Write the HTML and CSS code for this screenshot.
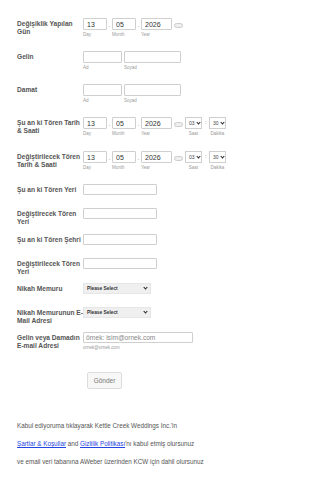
FILE: index.html
```html
<!DOCTYPE html>
<html lang="tr">
<head>
    <meta charset="UTF-8">
    <meta name="viewport" content="width=device-width, initial-scale=1.0">
    <title>Değişiklik Formu</title>
    <link rel="stylesheet" href="styles.css">
</head>
<body>

    <form class="form">
        <div class="row h33">
            <label class="lbl">Değişiklik Yapılan Gün</label>
            <div class="date">
                <div class="part"><input type="text" class="in day" value="13"><span class="sub">Day</span></div>
                <span class="sep">.</span>
                <div class="part"><input type="text" class="in day" value="05"><span class="sub">Month</span></div>
                <span class="sep">.</span>
                <div class="part"><input type="text" class="in year" value="2026"><span class="sub">Year</span></div>
                <span class="cal"></span>
            </div>
        </div>

        <div class="row h33">
            <label class="lbl">Gelin</label>
            <div class="names">
                <div class="part"><input type="text" class="in first"><span class="sub">Ad</span></div>
                <div class="part"><input type="text" class="in last"><span class="sub">Soyad</span></div>
            </div>
        </div>

        <div class="row h33">
            <label class="lbl">Damat</label>
            <div class="names">
                <div class="part"><input type="text" class="in first"><span class="sub">Ad</span></div>
                <div class="part"><input type="text" class="in last"><span class="sub">Soyad</span></div>
            </div>
        </div>

        <div class="row h34">
            <label class="lbl">Şu an ki Tören Tarih &amp; Saati</label>
            <div class="date">
                <div class="part"><input type="text" class="in day" value="13"><span class="sub">Day</span></div>
                <span class="sep">.</span>
                <div class="part"><input type="text" class="in day" value="05"><span class="sub">Month</span></div>
                <span class="sep">.</span>
                <div class="part"><input type="text" class="in year" value="2026"><span class="sub">Year</span></div>
                <span class="cal"></span>
                <div class="part mid"><span class="time">03 <i class="chev"></i></span><span class="sub">Saat</span></div>
                <span class="colon">:</span>
                <div class="part mid"><span class="time">30 <i class="chev"></i></span><span class="sub">Dakika</span></div>
            </div>
        </div>

        <div class="row h33">
            <label class="lbl">Değiştirilecek Tören Tarih &amp; Saati</label>
            <div class="date">
                <div class="part"><input type="text" class="in day" value="13"><span class="sub">Day</span></div>
                <span class="sep">.</span>
                <div class="part"><input type="text" class="in day" value="05"><span class="sub">Month</span></div>
                <span class="sep">.</span>
                <div class="part"><input type="text" class="in year" value="2026"><span class="sub">Year</span></div>
                <span class="cal"></span>
                <div class="part mid"><span class="time">03 <i class="chev"></i></span><span class="sub">Saat</span></div>
                <span class="colon">:</span>
                <div class="part mid"><span class="time">30 <i class="chev"></i></span><span class="sub">Dakika</span></div>
            </div>
        </div>

        <div class="row h24">
            <label class="lbl">Şu an ki Tören Yeri</label>
            <input type="text" class="in wide">
        </div>

        <div class="row h26">
            <label class="lbl">Değiştirecek Tören Yeri</label>
            <input type="text" class="in wide">
        </div>

        <div class="row h24">
            <label class="lbl">Şu an ki Tören Şehri</label>
            <input type="text" class="in wide">
        </div>

        <div class="row h25">
            <label class="lbl">Değiştirilecek Tören Yeri</label>
            <input type="text" class="in wide">
        </div>

        <div class="row h24">
            <label class="lbl">Nikah Memuru</label>
            <span class="select">Please Select <i class="chev"></i></span>
        </div>

        <div class="row h25">
            <label class="lbl">Nikah Memurunun E-Mail Adresi</label>
            <span class="select">Please Select <i class="chev"></i></span>
        </div>

        <div class="row">
            <label class="lbl">Gelin veya Damadın E-mail Adresi</label>
            <div class="part">
                <input type="text" class="in email" placeholder="örnek: isim@ornek.com">
                <span class="sub">ornek@ornek.com</span>
            </div>
        </div>

        <div class="actions">
            <button type="button" class="btn">Gönder</button>
        </div>
    </form>

    <div class="terms">
        <p>Kabul ediyoruma tıklayarak Kettle Creek Weddings Inc.'in</p>
        <p><a href="#">Şartlar &amp; Koşullar</a> and <a href="#">Gizlilik Politikası</a>'nı kabul etmiş olursunuz</p>
        <p>ve email veri tabanına AWeber üzerinden KCW için dahil olursunuz</p>
    </div>

</body>
</html>
```

FILE: styles.css
```css
body {
    margin: 0;
    background-color: #ffffff;
    font-family: "Liberation Sans", Arial, sans-serif;
    color: #555;
}

.form {
    padding: 18px 0 0 17px;
}

.row {
    display: flex;
    align-items: flex-start;
}

.h24 { height: 24px; }
.h25 { height: 25px; }
.h26 { height: 26px; }
.h33 { height: 33px; }
.h34 { height: 34px; }

.lbl {
    width: 66px;
    flex-shrink: 0;
    padding-top: 2px;
    font-size: 6.6px;
    line-height: 8px;
    font-weight: bold;
    color: #555;
}

.date, .names {
    display: flex;
    align-items: flex-start;
}

.names {
    gap: 2px;
}

.part {
    display: flex;
    flex-direction: column;
}

.part.mid {
    align-items: center;
}

.in {
    box-sizing: border-box;
    height: 12px;
    margin: 0;
    padding: 0 3px;
    border: 1px solid #cfcfcf;
    border-radius: 1px;
    font-family: "Liberation Sans", Arial, sans-serif;
    font-size: 7px;
    color: #333;
    background: #fff;
}

.in.day { width: 24px; }
.in.year { width: 31px; }
.in.first { width: 39px; }
.in.last { width: 57px; }
.in.wide { width: 74px; height: 11px; }
.in.email { width: 110px; height: 11px; padding: 0 2px; font-size: 6.6px; }

.in::placeholder {
    color: #888;
}

.sub {
    margin-top: 2px;
    font-size: 4.5px;
    line-height: 6px;
    color: #999;
}

.sep {
    width: 5px;
    text-align: center;
    font-size: 7px;
    line-height: 14px;
    color: #999;
}

.cal {
    width: 7px;
    height: 3px;
    margin: 5px 2px 0 2px;
    border: 1px solid #ccc;
    border-radius: 3px;
    background: #eee;
}

.time {
    box-sizing: border-box;
    display: flex;
    align-items: center;
    gap: 2px;
    width: 17px;
    height: 12px;
    padding-left: 3px;
    border: 1px solid #cfcfcf;
    font-size: 5px;
    color: #444;
}

.colon {
    width: 7px;
    text-align: center;
    font-size: 6px;
    line-height: 11px;
    color: #666;
}

.chev {
    display: inline-block;
    width: 2px;
    height: 2px;
    margin-top: -2px;
    border-right: 1.2px solid #222;
    border-bottom: 1.2px solid #222;
    transform: rotate(45deg);
}

.select {
    box-sizing: border-box;
    display: flex;
    align-items: center;
    justify-content: space-between;
    width: 68px;
    height: 11px;
    padding: 0 3px;
    border: 1px solid #e6e6e6;
    background: #efefef;
    font-size: 4.8px;
    font-weight: bold;
    color: #333;
}

.actions {
    padding: 18px 0 0 70px;
}

.btn {
    width: 35px;
    height: 17px;
    padding: 0;
    border: 1px solid #ddd;
    border-radius: 2px;
    background: #f7f7f7;
    font-family: "Liberation Sans", Arial, sans-serif;
    font-size: 6.5px;
    color: #777;
}

.terms {
    padding: 33px 0 0 17px;
    font-size: 6.3px;
    color: #555;
}

.terms p {
    margin: 0 0 11px 0;
    line-height: 7px;
}

.terms a {
    color: #2346e0;
}
```
